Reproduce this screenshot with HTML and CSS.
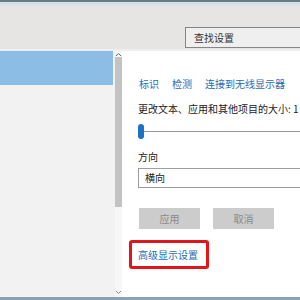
FILE: index.html
```html
<!DOCTYPE html>
<html lang="zh">
<head>
<meta charset="utf-8">
<link rel="stylesheet" href="styles.css">
</head>
<body>
<div class="window">
  <header class="topbar">
    <div class="search">查找设置</div>
  </header>
  <div class="main">
    <nav class="sidebar">
      <div class="nav-item selected"></div>
    </nav>
    <div class="scrollbar">
      <svg class="arrow up" width="7" height="5" viewBox="0 0 7 5"><path d="M1 4 L3.5 1.5 L6 4" fill="none" stroke="#666" stroke-width="1"/></svg>
      <div class="thumb"></div>
      <div class="track"></div>
      <svg class="arrow down" width="7" height="5" viewBox="0 0 7 5"><path d="M1 1 L3.5 3.5 L6 1" fill="none" stroke="#888" stroke-width="1"/></svg>
    </div>
    <section class="content">
      <div class="links">
        <span class="link">标识</span>
        <span class="link">检测</span>
        <span class="link">连接到无线显示器</span>
      </div>
      <div class="label size-label">更改文本、应用和其他项目的大小: 1</div>
      <div class="slider"><div class="slider-thumb"></div><div class="slider-track"></div></div>
      <div class="label dir-label">方向</div>
      <div class="select">横向</div>
      <div class="buttons">
        <div class="btn">应用</div>
        <div class="btn">取消</div>
      </div>
      <div class="highlight"><span class="link">高级显示设置</span></div>
    </section>
  </div>
  <div class="bottomline"></div>
</div>
</body>
</html>
```

FILE: styles.css
```css
html, body {
  margin: 0;
  padding: 0;
  width: 300px;
  height: 300px;
  overflow: hidden;
  font-family: "Noto Sans CJK SC", "Noto Sans", sans-serif;
  font-size: 10px;
  color: #222;
  background: #fff;
}
.window {
  display: flex;
  flex-direction: column;
  height: 300px;
  overflow: hidden;
}
.topbar {
  height: 46px;
  flex: none;
  background: #e6e5e4;
  border-top: 2px solid #6b7c84;
  box-shadow: inset 0 3px 0 #d2e2ea;
  border-bottom: 2px solid #eeeeee;
  padding-top: 1px;
  display: flex;
  align-items: flex-start;
  overflow: hidden;
}
.search {
  margin-top: 24px;
  margin-left: 185px;
  flex: 1;
  height: 19px;
  border: 1px solid #858585;
  border-right: none;
  background: #efefef;
  padding-left: 8px;
  line-height: 19px;
  color: #333;
  font-size: 10px;
}
.main {
  flex: 1;
  display: flex;
  min-height: 0;
}
.sidebar {
  width: 115px;
  flex: none;
  background: #f2f2f2;
}
.nav-item.selected {
  height: 34px;
  width: 113px;
  background: #8cbde4;
}
.scrollbar {
  width: 7px;
  flex: none;
  background: #f7f7f7;
  display: flex;
  flex-direction: column;
  align-items: center;
}
.arrow {
  flex: none;
  display: block;
}
.arrow.up { margin-top: 1px; }
.arrow.down { margin-bottom: 2px; }
.thumb {
  width: 7px;
  height: 150px;
  background: #c3c3c3;
  flex: none;
}
.track { flex: 1; }
.content {
  flex: 1;
  min-width: 0;
  overflow: hidden;
  padding-left: 16px;
  padding-top: 26px;
  display: flex;
  flex-direction: column;
  align-items: flex-start;
}
.links {
  display: flex;
  gap: 13px;
  line-height: 14px;
  padding-left: 1px;
}
.link { color: #1e6cb4; }
.label { line-height: 14px; white-space: nowrap; }
.size-label { margin-top: 11px; }
.slider {
  margin-top: 8px;
  align-self: stretch;
  height: 15px;
  display: flex;
  align-items: center;
}
.slider-thumb {
  width: 6px;
  height: 15px;
  border-radius: 3px;
  background: #1b72c6;
  flex: none;
}
.slider-track {
  flex: 1;
  height: 1px;
  background: #9a9a9a;
}
.dir-label { margin-top: 11px; }
.select {
  margin-top: 4px;
  align-self: stretch;
  height: 18px;
  border: 1px solid #9d9d9d;
  border-right: none;
  line-height: 18px;
  padding-left: 6px;
  flex: none;
}
.buttons {
  margin-top: 20px;
  display: flex;
  gap: 13px;
  padding-left: 1px;
}
.btn {
  width: 61px;
  height: 21px;
  line-height: 21px;
  text-align: center;
  background: #cccccc;
  color: #8a8a8a;
}
.highlight {
  margin-top: 11px;
  margin-left: -9px;
  border: 3px solid #e0161b;
  border-radius: 3px;
  padding: 4px 8px 4px 6px;
  line-height: 15px;
}
.bottomline {
  height: 3px;
  flex: none;
  background: #8aa3b2;
}
```
